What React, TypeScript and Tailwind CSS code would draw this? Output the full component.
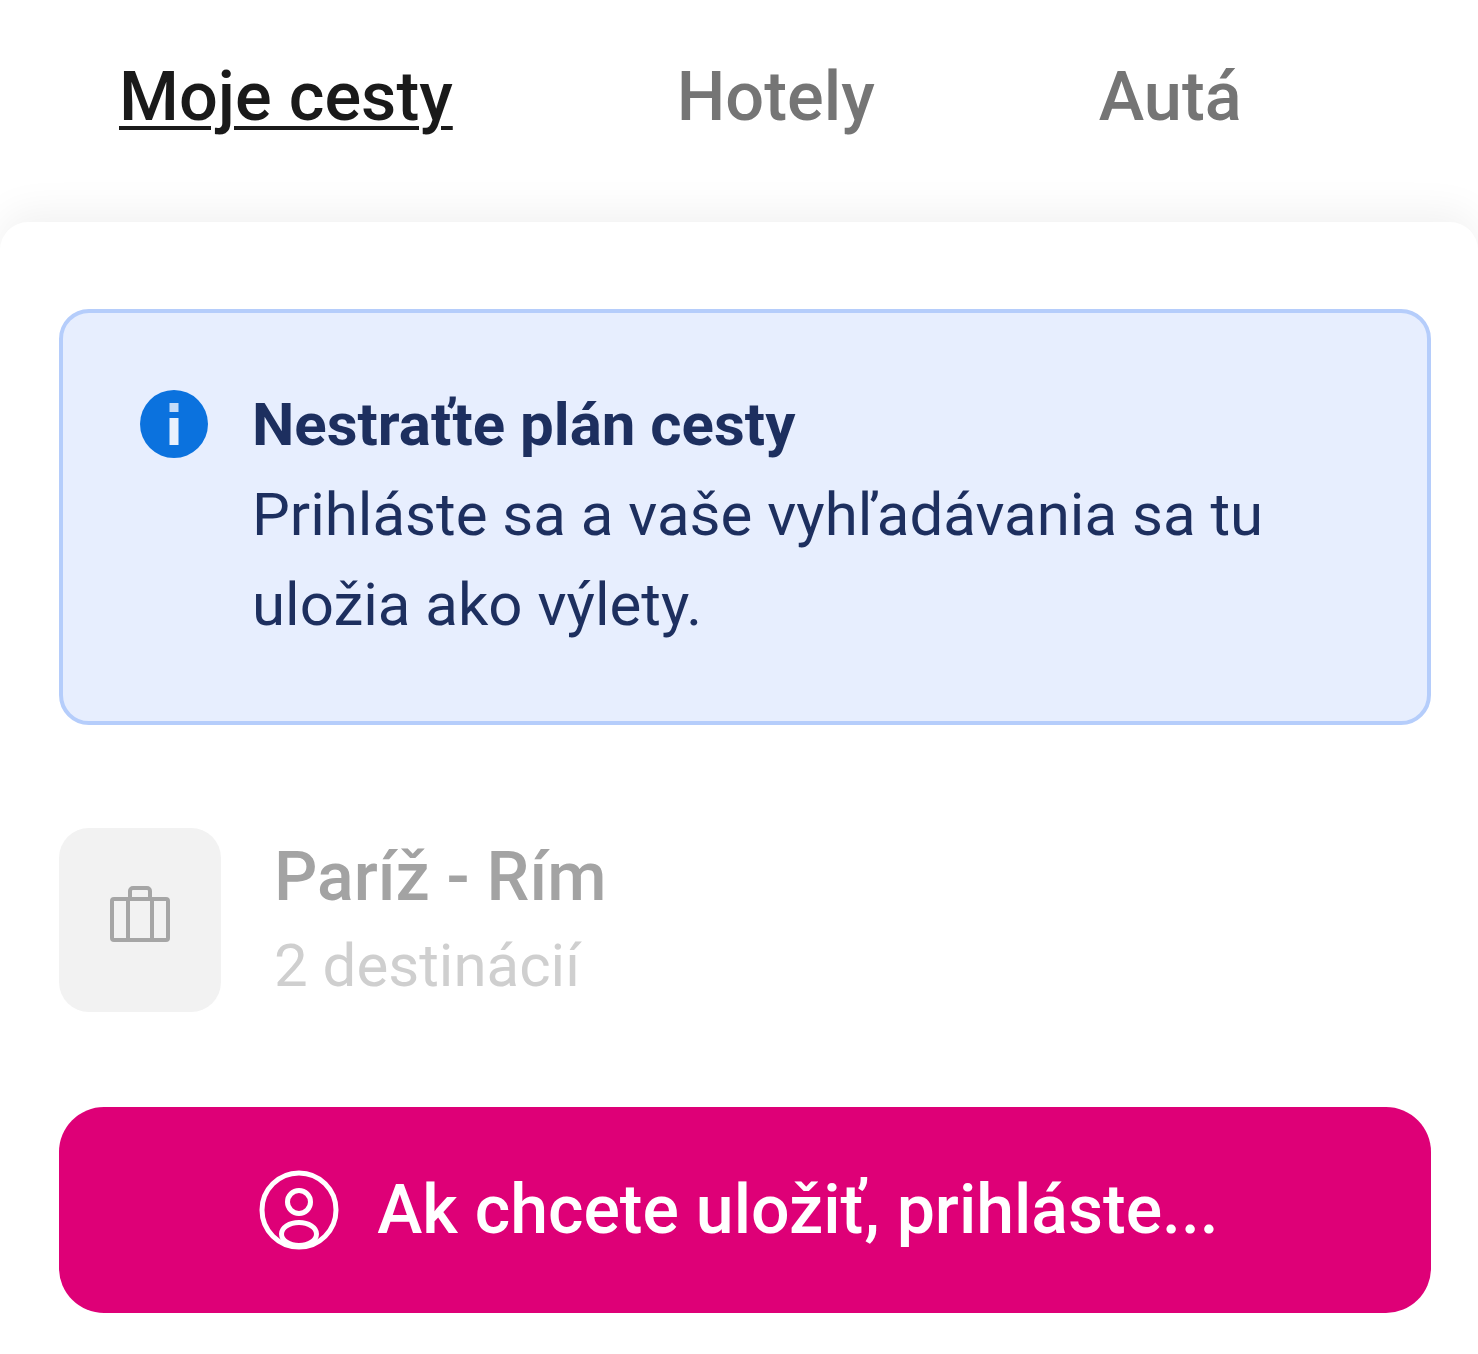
export default function App() {
  return (
    <div className="h-[1354px] w-[1478px] overflow-hidden bg-white font-['Roboto',sans-serif]">
      <nav className="flex h-[222px] gap-[224px] pl-[119px] pt-[57px] text-[68.5px] font-medium leading-[80px] text-[#757575]">
        <span className="text-[#1a1a1a] underline decoration-[4px] underline-offset-[6px]">Moje cesty</span>
        <span>Hotely</span>
        <span>Autá</span>
      </nav>
      <main className="h-[1132px] rounded-t-[28px] bg-white px-[59px] pt-[87px] shadow-[0_-10px_40px_rgba(0,0,0,0.06)]">
        <div className="flex h-[416px] w-[1372px] gap-[44px] rounded-[30px] border-4 border-[#b5cdfb] bg-[#e7eefe] pl-[77px] pt-[77px]">
          <svg width="68" height="68" viewBox="0 0 68 68" className="shrink-0">
            <circle cx="34" cy="34" r="34" fill="#0b72de" />
            <rect x="29.5" y="13" width="9" height="9" fill="#c5dcf8" />
            <rect x="29.5" y="28" width="9" height="27" fill="#e8f1fd" />
          </svg>
          <div className="w-[1090px] text-[60px] leading-[90px] text-[#1d2f5f]">
            <div className="-mt-[10px] font-bold">Nestraťte plán cesty</div>
            <div>Prihláste sa a vaše vyhľadávania sa tu uložia ako výlety.</div>
          </div>
        </div>
        <div className="mt-[103px] flex h-[184px] gap-[53px]">
          <div className="flex h-[184px] w-[162px] items-center justify-center rounded-[30px] bg-[#f2f2f2]">
            <svg width="60" height="56" viewBox="0 0 60 56" fill="none" stroke="#a6a6a6" strokeWidth="4" className="-mt-[12px]">
              <rect x="2" y="13" width="56" height="41" rx="2" />
              <path d="M18 13v41M42 13v41M20 13V5a3 3 0 0 1 3-3h14a3 3 0 0 1 3 3v8" />
            </svg>
          </div>
          <div>
            <div className="mt-[9px] text-[68px] font-medium leading-[80px] text-[#a3a3a3]">Paríž - Rím</div>
            <div className="mt-[14px] text-[60px] leading-[70px] text-[#cfcfcf]">2 destinácií</div>
          </div>
        </div>
        <button className="mt-[95px] flex h-[206px] w-[1372px] items-center justify-center gap-[38px] rounded-[45px] bg-[#de0077] pr-[12px] text-[68px] font-medium text-white">
          <svg width="80" height="80" viewBox="0 0 80 80" fill="none" stroke="white" strokeWidth="5">
            <circle cx="40" cy="40" r="37" />
            <circle cx="40" cy="32" r="11.5" />
            <ellipse cx="40" cy="64" rx="17.5" ry="11.5" />
          </svg>
          <span>Ak chcete uložiť, prihláste...</span>
        </button>
      </main>
    </div>
  );
}
